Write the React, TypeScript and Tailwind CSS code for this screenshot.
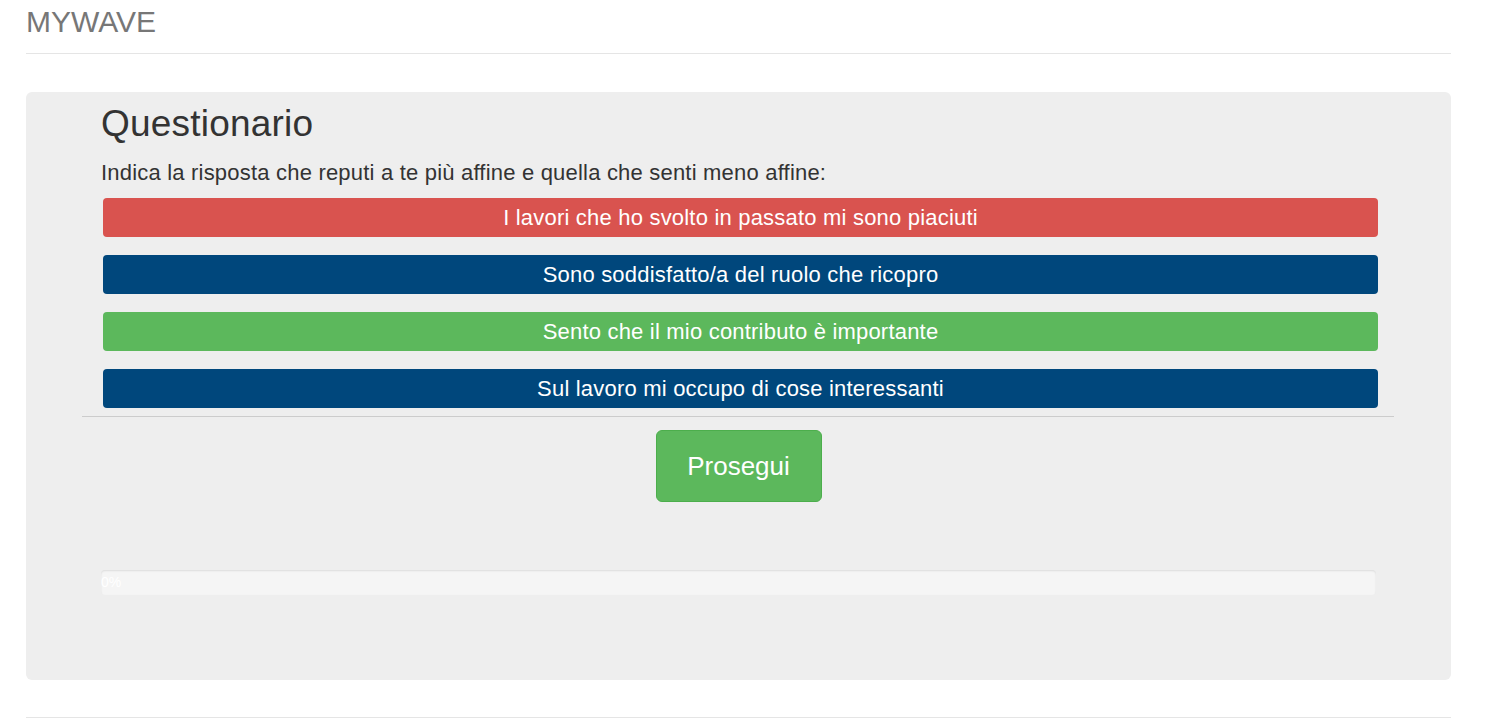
const answers = [
    { text: "I lavori che ho svolto in passato mi sono piaciuti", color: "bg-[#d9534f]" },
    { text: "Sono soddisfatto/a del ruolo che ricopro", color: "bg-[#00477c]" },
    { text: "Sento che il mio contributo è importante", color: "bg-[#5cb85c]" },
    { text: "Sul lavoro mi occupo di cose interessanti", color: "bg-[#00477c]" },
]

const App = () => {
    return (
        <div className="min-h-screen bg-white font-['Liberation_Sans',Arial,sans-serif] text-[#333]">
            <div className="px-[26px] pr-[42px]">
                <div className="h-[54px] border-b border-[#e5e5e5] pt-[2px]">
                    <h3 className="text-[30px] leading-[40px] text-[#777]">MYWAVE</h3>
                </div>

                <div className="mt-[38px] h-[588px] rounded-md bg-[#eee] pt-[12px]">
                    <div className="pl-[75px] pr-[73px]">
                        <h1 className="text-[37px] leading-[40px] tracking-[0.2px]">Questionario</h1>
                        <p className="mt-[14px] text-[22px] leading-[30px] tracking-[0.2px]">
                            Indica la risposta che reputi a te più affine e quella che senti meno affine:
                        </p>
                    </div>

                    <div className="mt-[10px] flex flex-col gap-[18px] pl-[77px] pr-[73px]">
                        {answers.map((a) => (
                            <div
                                key={a.text}
                                className={`flex h-[39px] items-center justify-center rounded ${a.color} text-[22px] tracking-[0.2px] text-white`}
                            >
                                {a.text}
                            </div>
                        ))}
                    </div>

                    <div className="ml-[56px] mr-[57px] mt-[8px] border-t border-[#ccc]" />

                    <div className="mt-[13px] flex justify-center">
                        <button className="h-[72px] w-[166px] rounded-md border border-[#4cae4c] bg-[#5cb85c] text-[26px] text-white">
                            Prosegui
                        </button>
                    </div>

                    <div className="ml-[75px] mr-[75px] mt-[68px] h-[25px] overflow-hidden rounded bg-[#f5f5f5] shadow-[inset_0_1px_2px_rgba(0,0,0,0.1)]">
                        <div className="h-full w-0 overflow-visible whitespace-nowrap text-[14px] leading-[25px] text-white">
                            0%
                        </div>
                    </div>
                </div>

                <div className="mt-[37px] border-t border-[#e5e5e5]" />
            </div>
        </div>
    )
}

export default App
